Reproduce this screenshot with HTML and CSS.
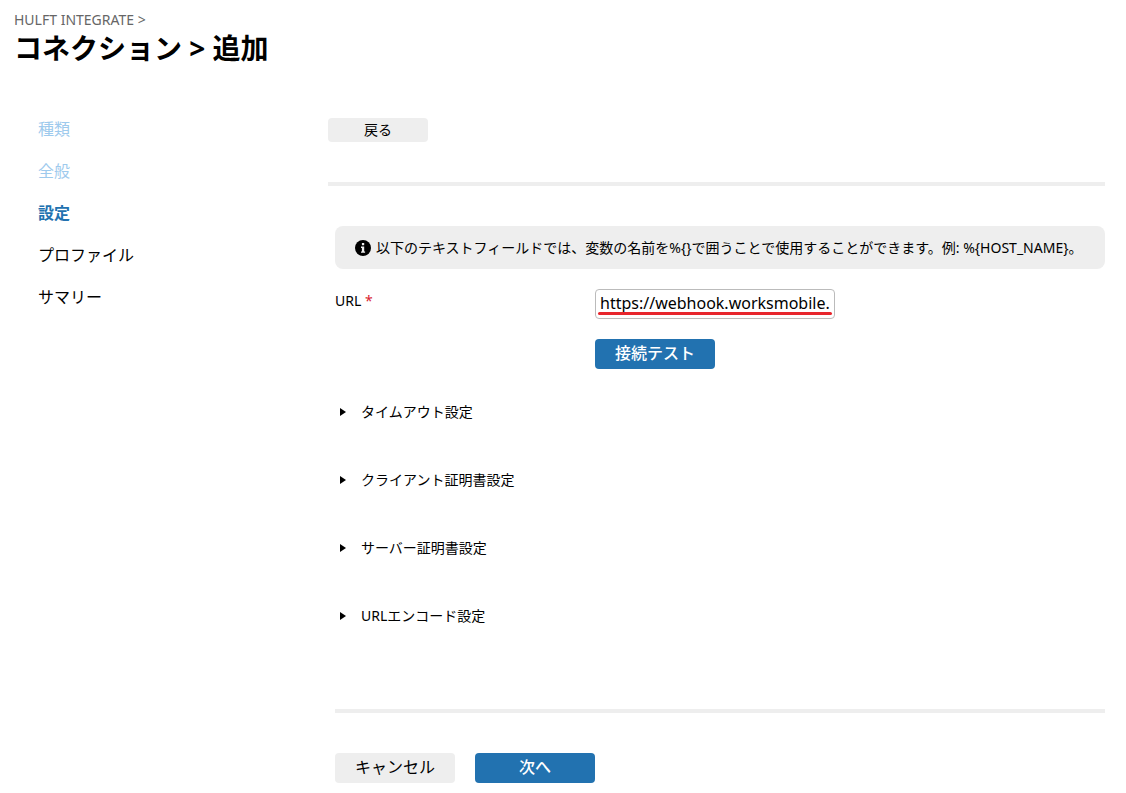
FILE: index.html
```html
<!DOCTYPE html>
<html lang="ja">
<head>
<meta charset="utf-8">
<meta name="viewport" content="width=device-width, initial-scale=1">
<title>コネクション &gt; 追加</title>
<link rel="stylesheet" href="styles.css">
</head>
<body>
<header class="page-header">
  <p class="breadcrumb">HULFT INTEGRATE &gt;</p>
  <h1 class="page-title">コネクション &gt; 追加</h1>
</header>
<div class="layout">
  <nav class="steps">
    <ol class="step-list">
      <li class="step step-done">種類</li>
      <li class="step step-done">全般</li>
      <li class="step step-current" aria-current="step">設定</li>
      <li class="step">プロファイル</li>
      <li class="step">サマリー</li>
    </ol>
  </nav>
  <main class="content">
    <button type="button" class="button button-small">戻る</button>
    <hr class="rule">
    <form class="settings">
      <div class="notice">
        <svg class="notice-icon" viewBox="0 0 16 16" aria-hidden="true">
          <circle cx="8" cy="8" r="8"/>
          <path fill="#eee" d="M6.9 3h2.3v2.2H6.9zM6 6.6h3.2v4.9h.9v1.3H6v-1.3h.9V7.9H6z"/>
        </svg>
        <span>以下のテキストフィールドでは、変数の名前を%{}で囲うことで使用することができます。例: %{HOST_NAME}。</span>
      </div>
      <div class="field">
        <label class="field-label" for="url">URL <span class="required">*</span></label>
        <div class="field-control">
          <div class="marked">
            <input class="text-input" id="url" type="text" value="https://webhook.worksmobile." required>
          </div>
          <button type="button" class="button button-primary">接続テスト</button>
        </div>
      </div>
      <div class="sections">
        <details class="section"><summary class="section-title"><span class="arrow"></span>タイムアウト設定</summary></details>
        <details class="section"><summary class="section-title"><span class="arrow"></span>クライアント証明書設定</summary></details>
        <details class="section"><summary class="section-title"><span class="arrow"></span>サーバー証明書設定</summary></details>
        <details class="section"><summary class="section-title"><span class="arrow"></span>URLエンコード設定</summary></details>
      </div>
      <hr class="rule rule-bottom">
      <div class="actions">
        <button type="button" class="button">キャンセル</button>
        <button type="button" class="button button-primary">次へ</button>
      </div>
    </form>
  </main>
</div>
</body>
</html>
```
FILE: styles.css
```css
* {
  box-sizing: border-box;
}

body {
  margin: 0;
  padding: 10px 21px 10px 14px;
  background: #fff;
  color: #000;
  font: 14px/20px "Noto Sans", "Noto Sans CJK JP", sans-serif;
}

.breadcrumb {
  margin: 0;
  color: #666;
}

.page-title {
  margin: 0;
  font-size: 28px;
  line-height: 36px;
}

.layout {
  display: flex;
  padding-top: 52px;
}

.steps {
  flex: 0 0 314px;
  padding-left: 24px;
}

.step-list {
  display: flex;
  flex-direction: column;
  gap: 20px;
  margin: 0;
  padding: 0;
  list-style: none;
}

.step {
  font-size: 16px;
  line-height: 22px;
}

.step-done {
  color: #9ecaed;
}

.step-current {
  color: #2272b0;
  font-weight: 700;
}

.content {
  flex: 1;
  min-width: 0;
}

.button {
  display: block;
  width: 120px;
  height: 30px;
  padding: 0 8px 2px;
  border: 0;
  border-radius: 4px;
  background: #eee;
  color: #000;
  font-family: inherit;
  font-size: 16px;
  line-height: 28px;
  cursor: pointer;
}

.button-small {
  width: 100px;
  height: 24px;
  padding: 0 8px;
  font-size: 14px;
  line-height: 24px;
}

.button-primary {
  background: #2272b0;
  color: #fff;
  font-weight: 500;
}

.rule {
  height: 4px;
  margin: 40px 0;
  border: 0;
  background: #eee;
}

.settings {
  padding-left: 7px;
}

.notice {
  display: flex;
  align-items: center;
  gap: 5px;
  min-height: 43px;
  padding: 10px 20px;
  border-radius: 8px;
  background: #eee;
}

.notice-icon {
  flex: none;
  width: 16px;
  height: 16px;
}

.field {
  display: flex;
  padding-top: 20px;
}

.field-label {
  flex: 0 0 260px;
  padding-top: 2px;
}

.required {
  color: #d9232e;
}

.field-control {
  display: flex;
  flex-direction: column;
  gap: 20px;
}

.marked {
  position: relative;
  width: 240px;
}

.marked::after {
  position: absolute;
  right: 3px;
  bottom: 4px;
  left: 3px;
  height: 3px;
  border-radius: 2px;
  background: #e8262d;
  content: "";
  pointer-events: none;
}

.text-input {
  display: block;
  width: 100%;
  height: 30px;
  padding: 0 4px 2px;
  border: 1px solid #bbb;
  border-radius: 4px;
  background: #fff;
  color: #000;
  font-family: inherit;
  font-size: 16px;
}

.sections {
  padding-top: 33px;
}

.section {
  padding-bottom: 48px;
}

.section-title {
  display: flex;
  align-items: center;
  gap: 15px;
  padding-left: 5px;
  list-style: none;
  cursor: pointer;
}

.section-title::-webkit-details-marker {
  display: none;
}

.arrow {
  width: 6px;
  height: 8px;
  background: #000;
  clip-path: polygon(0 0, 100% 50%, 0 100%);
}

.rule-bottom {
  margin: 35px 0 40px;
}

.actions {
  display: flex;
  gap: 20px;
}
```
